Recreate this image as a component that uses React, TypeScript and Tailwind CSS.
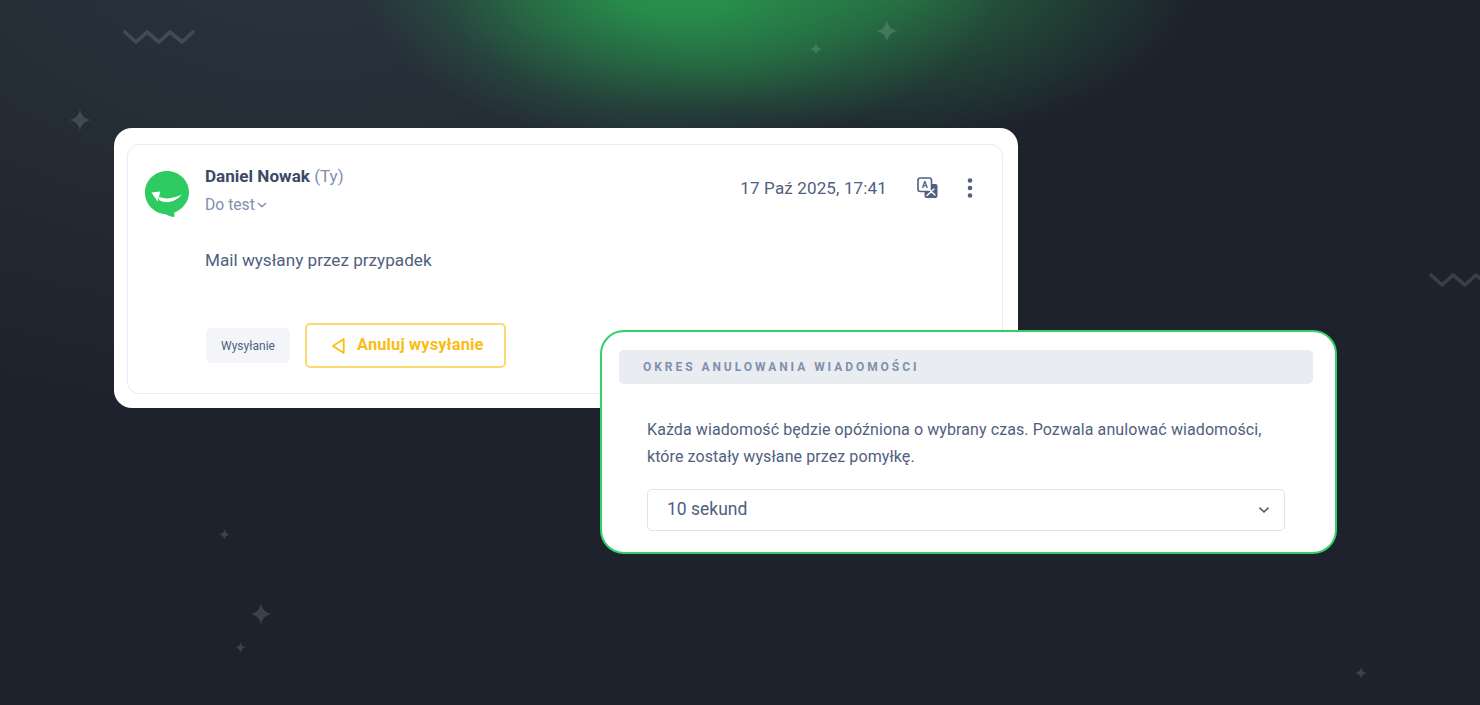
import React from "react";

function Star({ x, y, r }: { x: number; y: number; r: number }) {
  return (
    <svg className="absolute" style={{ left: x - r, top: y - r }} width={r * 2} height={r * 2} viewBox="0 0 20 20">
      <path d="M10 0C10.9 6 14 9.1 20 10C14 10.9 10.9 14 10 20C9.1 14 6 10.9 0 10C6 9.1 9.1 6 10 0Z" fill="#ffffff" fillOpacity="0.14" />
    </svg>
  );
}

function Zig({ x, y }: { x: number; y: number }) {
  return (
    <svg className="absolute" style={{ left: x, top: y }} width="72" height="18" viewBox="0 0 72 18" fill="none">
      <path d="M2 3L13 13L24 3L36 13L47 3L59 13L70 3" stroke="#ffffff" strokeOpacity="0.13" strokeWidth="3.6" strokeLinecap="round" strokeLinejoin="round" />
    </svg>
  );
}

export default function App() {
  return (
    <div className="relative w-[1480px] h-[705px] overflow-hidden bg-[#1e222c] font-['Roboto',sans-serif] pt-[128px] pl-[114px]">
      <div className="absolute inset-0 bg-[radial-gradient(ellipse_800px_480px_at_300px_-60px,rgba(60,80,90,0.42)_0%,rgba(60,80,90,0)_100%)]" />
      <div className="absolute inset-0 bg-[radial-gradient(ellipse_300px_170px_at_900px_-30px,rgba(40,147,76,0.65)_0%,rgba(40,147,76,0.3)_50%,rgba(40,147,76,0)_100%)]" />
      <div className="absolute inset-0 bg-[radial-gradient(ellipse_320px_180px_at_680px_-30px,#28934c_0%,rgba(40,147,76,0.92)_25%,rgba(40,147,76,0.58)_52%,rgba(40,147,76,0.2)_78%,rgba(40,147,76,0)_100%)]" />

      <Zig x={123} y={29} />
      <Zig x={1429} y={272} />
      <Star x={80} y={120} r={11} />
      <Star x={887} y={31} r={11} />
      <Star x={816} y={49} r={6} />
      <Star x={224} y={534} r={5.5} />
      <Star x={261} y={614} r={11} />
      <Star x={240} y={647} r={5.5} />
      <Star x={1361} y={673} r={6} />

      {/* Mail card */}
      <div className="relative w-[904px] h-[280px] bg-white rounded-[18px] px-[13px] pt-[16px] pb-[14px]">
        <div className="w-[876px] h-[250px] rounded-[12px] border border-[#e9ebf2] flex flex-col pl-[17px] pr-[20px]">
          <div className="flex items-start">
            <svg className="mt-[26px]" width="44" height="46" viewBox="0 0 44 46">
              <path d="M22 0C34.2 0 44 9.6 44 21.4C44 31 37 38.6 29.4 41.4C29.2 43 29.2 44.6 29.8 45.8C26.4 46 23.4 44.8 20.6 43.2C9 42.4 0 33 0 21.4C0 9.6 9.8 0 22 0Z" fill="#2dcb61" />
              <path d="M14 26C21 28.4 28.5 27.8 36.8 23.6C31 30.6 22 33.6 14 29Z" fill="#ffffff" />
              <path d="M6.4 21.6L15.4 20.4L12.6 30.6Z" fill="#ffffff" />
            </svg>
            <div className="ml-[16px] pt-[19px]">
              <div className="text-[17.1px] leading-[24px] text-[#7f90ad]">
                <span className="font-bold text-[#3b4a66]">Daniel Nowak</span> (Ty)
              </div>
              <div className="mt-[6px] pt-[1px] flex items-center text-[15.7px] leading-[20px] text-[#7f90ad]">
                Do test
                <svg className="ml-[2px]" width="10" height="10" viewBox="0 0 10 10" fill="none">
                  <path d="M1.5 3.5L5 6.8L8.5 3.5" stroke="#7f90ad" strokeWidth="1.5" strokeLinecap="round" strokeLinejoin="round" />
                </svg>
              </div>
            </div>
            <div className="ml-auto flex items-center pt-[31px]">
              <span className="text-[17px] leading-[24px] text-[#50607e] tracking-[0.15px]">17 Paź 2025, 17:41</span>
              <svg className="ml-[30px]" width="21" height="22" viewBox="0 0 21 22" fill="none">
                <rect x="7.5" y="7" width="13" height="14" rx="2" fill="#50607e" />
                <rect x="1" y="1" width="13.5" height="13.5" rx="2.2" fill="#ffffff" stroke="#50607e" strokeWidth="1.6" />
                <text x="7.7" y="11.3" textAnchor="middle" fontSize="9" fontWeight="700" fill="#50607e" fontFamily="Roboto">A</text>
                <path d="M10 18.5L17 12M12 12.5L18 18" stroke="#ffffff" strokeWidth="1.4" strokeLinecap="round" />
              </svg>
              <svg className="ml-[29px]" width="6" height="22" viewBox="0 0 6 22" fill="#50607e">
                <circle cx="3" cy="3.5" r="2.3" />
                <circle cx="3" cy="11" r="2.3" />
                <circle cx="3" cy="18.5" r="2.3" />
              </svg>
              <span className="w-[9px]" />
            </div>
          </div>
          <p className="ml-[60px] mt-[31px] text-[17.15px] leading-[24px] text-[#50607e]">Mail wysłany przez przypadek</p>
          <div className="ml-[61px] mt-[51px] flex items-center">
            <span className="w-[84px] h-[35px] flex items-center justify-center rounded-[5px] bg-[#f3f5f9] text-[12px] text-[#50607e]">Wysyłanie</span>
            <button className="ml-[15px] w-[201px] h-[45px] rounded-[5px] border-2 border-[#fbd872] flex items-center pl-[24px] text-[16.5px] font-bold text-[#fbbc13]">
              <svg width="15" height="18" viewBox="0 0 15 18" fill="none">
                <path d="M12.7 2L2 9L12.7 16Z" stroke="#fbbc13" strokeWidth="1.8" strokeLinejoin="round" />
              </svg>
              <span className="ml-[11px] tracking-[0.1px]">Anuluj wysyłanie</span>
            </button>
          </div>
        </div>
      </div>

      {/* Settings card */}
      <div className="absolute left-[600px] top-[330px] w-[737px] h-[224px] rounded-[24px] border-2 border-[#31cf68] bg-white pl-[17px] pr-[22px] pt-[18px]">
        <div className="h-[34px] rounded-[5px] bg-[#e9ecf1] pl-[24px] flex items-center text-[12px] font-bold tracking-[2.95px] text-[#7f90ad]">
          OKRES ANULOWANIA WIADOMOŚCI
        </div>
        <p className="ml-[28px] mt-[32px] text-[16px] leading-[27px] text-[#50607e] tracking-[0.09px]">
          Każda wiadomość będzie opóźniona o wybrany czas. Pozwala anulować wiadomości,
          <br />
          które zostały wysłane przez pomyłkę.
        </p>
        <div className="ml-[28px] mt-[19px] w-[638px] h-[42px] rounded-[5px] border border-[#dfe3ec] flex items-center justify-between pl-[19px] pr-[14px] pb-[2px] text-[17.5px] text-[#50607e]">
          10 sekund
          <svg className="mt-[2px]" width="12" height="12" viewBox="0 0 12 12" fill="none">
            <path d="M2 4.2L6 8L10 4.2" stroke="#50607e" strokeWidth="1.7" strokeLinecap="round" strokeLinejoin="round" />
          </svg>
        </div>
      </div>
    </div>
  );
}
